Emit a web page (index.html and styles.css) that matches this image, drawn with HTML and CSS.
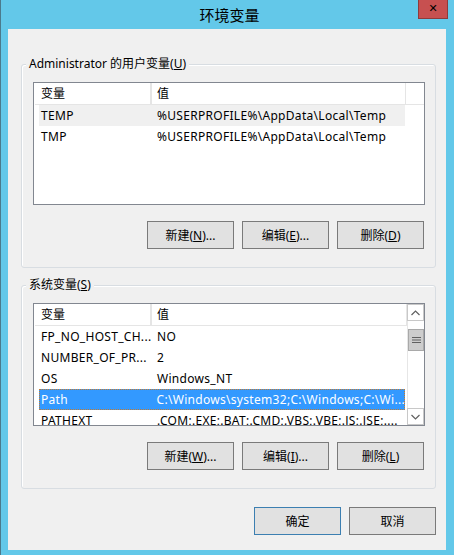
FILE: index.html
```html
<!DOCTYPE html>
<html lang="zh-CN">

<head>
    <meta charset="UTF-8">
    <title>环境变量</title>
    <link rel="stylesheet" href="styles.css">
</head>

<body>
<div class="window">
    <div class="titlebar">
        <span class="title">环境变量</span>
        <span class="close">✕</span>
    </div>
    <div class="client">
        <div class="group">
            <span class="legend">Administrator 的用户变量(<u>U</u>)</span>
            <div class="list">
                <div class="row head">
                    <span class="c1">变量</span><span class="c2">值</span><span class="c3"></span>
                </div>
                <div class="row hover">
                    <span class="c1">TEMP</span><span class="c2">%USERPROFILE%\AppData\Local\Temp</span>
                </div>
                <div class="row">
                    <span class="c1">TMP</span><span class="c2">%USERPROFILE%\AppData\Local\Temp</span>
                </div>
            </div>
            <div class="btns">
                <button class="btn">新建(<u>N</u>)...</button>
                <button class="btn">编辑(<u>E</u>)...</button>
                <button class="btn">删除(<u>D</u>)</button>
            </div>
        </div>

        <div class="group">
            <span class="legend">系统变量(<u>S</u>)</span>
            <div class="list scroll">
                <div class="rows">
                    <div class="row head">
                        <span class="c1">变量</span><span class="c2">值</span>
                    </div>
                    <div class="row">
                        <span class="c1">FP_NO_HOST_CH...</span><span class="c2">NO</span>
                    </div>
                    <div class="row">
                        <span class="c1">NUMBER_OF_PR...</span><span class="c2">2</span>
                    </div>
                    <div class="row">
                        <span class="c1">OS</span><span class="c2">Windows_NT</span>
                    </div>
                    <div class="row sel">
                        <span class="c1">Path</span><span class="c2">C:\Windows\system32;C:\Windows;C:\Wi...</span>
                    </div>
                    <div class="row">
                        <span class="c1">PATHEXT</span><span class="c2">.COM;.EXE;.BAT;.CMD;.VBS;.VBE;.JS;.JSE;....</span>
                    </div>
                </div>
                <div class="vscroll">
                    <div class="arrow">
                        <svg width="9" height="6" viewBox="0 0 9 6"><path d="M0.5 5 L4.5 1 L8.5 5" fill="none" stroke="#606060" stroke-width="1.2"/></svg>
                    </div>
                    <div class="track">
                        <div class="thumb">
                            <svg width="9" height="8" viewBox="0 0 9 8"><path d="M0 1.5 H9 M0 4 H9 M0 6.5 H9" stroke="#606060" stroke-width="1.2"/></svg>
                        </div>
                    </div>
                    <div class="arrow">
                        <svg width="9" height="6" viewBox="0 0 9 6"><path d="M0.5 1 L4.5 5 L8.5 1" fill="none" stroke="#606060" stroke-width="1.2"/></svg>
                    </div>
                </div>
            </div>
            <div class="btns">
                <button class="btn">新建(<u>W</u>)...</button>
                <button class="btn">编辑(<u>I</u>)...</button>
                <button class="btn">删除(<u>L</u>)</button>
            </div>
        </div>

        <div class="btns bottom">
            <button class="btn default">确定</button>
            <button class="btn">取消</button>
        </div>
    </div>
</div>
</body>

</html>
```

FILE: styles.css
```css
body {
    margin: 0;
    background: #63c8e9;
    font-family: "Noto Sans", "Noto Sans CJK SC", sans-serif;
    font-size: 12px;
    color: #000;
}

.window {
    width: 454px;
    height: 555px;
    box-sizing: border-box;
    border-left: 1px solid #4b7a8c;
    position: relative;
}

.titlebar {
    height: 29px;
    text-align: center;
}

.title {
    display: inline-block;
    font-size: 15px;
    line-height: 29px;
    margin-left: 4px;
    font-family: "Noto Sans CJK SC", sans-serif;
}

.close {
    position: absolute;
    top: 0;
    left: 417px;
    width: 30px;
    height: 19px;
    box-sizing: border-box;
    background: #c75050;
    border: 1px solid #8e3b3b;
    border-top: none;
    text-align: center;
    font-size: 11px;
    font-weight: bold;
    line-height: 18px;
    font-family: "DejaVu Sans", sans-serif;
}

.client {
    margin-left: 7px;
    width: 438px;
    height: 521px;
    box-sizing: border-box;
    background: #f0f0f0;
    padding: 35px 10px 0 13px;
}

.group {
    border: 1px solid #d8dde2;
    border-radius: 3px;
    height: 204px;
    box-sizing: border-box;
    padding: 0 10px 0 11px;
    margin-bottom: 17px;
    box-shadow: inset 1px 1px 0 #fff;
}

.legend {
    display: block;
    width: max-content;
    margin: -9px 0 0 -7px;
    padding: 0 3px;
    background: #f0f0f0;
    line-height: 16px;
}

.list {
    margin-top: 10px;
    height: 123px;
    box-sizing: border-box;
    border: 1px solid #828790;
    background: #fff;
    overflow: hidden;
}

.scroll {
    display: flex;
}

.rows {
    flex: 1;
    overflow: hidden;
}

.row {
    display: flex;
    height: 21px;
    line-height: 21px;
    white-space: nowrap;
    margin-left: 5px;
    width: 366px;
    letter-spacing: 0.3px;
}

.row .c1 {
    width: 116px;
    padding-left: 2px;
}

.row .c2 {
    flex: 1;
}

.head {
    margin-left: 1px;
    width: auto;
    height: 22px;
    box-sizing: border-box;
    border-bottom: 1px solid #e5e5e5;
    line-height: 21px;
    letter-spacing: 0;
}

.head .c1 {
    width: 109px;
    padding-left: 6px;
    border-right: 2px solid #e5e5e5;
}

.head .c2 {
    flex: none;
    width: 248px;
    padding-left: 5px;
    border-right: 1px solid #e5e5e5;
}

.head .c3 {
    flex: 1;
}

.scroll .head .c2 {
    flex: 1;
}

.hover {
    background: #f0f0f0;
}

.sel {
    background: #3399ff;
    color: #fff;
    outline: 1px dotted #c47a2e;
    outline-offset: -1px;
}

.vscroll {
    width: 17px;
    display: flex;
    flex-direction: column;
    background: #fff;
}

.arrow {
    height: 17px;
    box-sizing: border-box;
    border: 1px solid #c8c8c8;
    display: flex;
    align-items: center;
    justify-content: center;
}

.track {
    flex: 1;
    padding-top: 8px;
    border-left: 1px solid #e6e6e6;
}

.thumb {
    height: 22px;
    box-sizing: border-box;
    background: #cdcdcd;
    border: 1px solid #a9a9a9;
    display: flex;
    align-items: center;
    justify-content: center;
}

.btns {
    display: flex;
    justify-content: flex-end;
    gap: 8px;
    margin-top: 16px;
    padding-right: 1px;
}

.btn {
    width: 87px;
    height: 28px;
    background: #e1e1e1;
    border: 1px solid #7a7a7a;
    font-family: "Noto Sans", "Noto Sans CJK SC", sans-serif;
    font-size: 12px;
    color: #000;
    padding: 0;
}

.bottom {
    margin-top: 0;
    padding-top: 1px;
    padding-right: 0;
}

.default {
    border-color: #3c7fb1;
}
```
